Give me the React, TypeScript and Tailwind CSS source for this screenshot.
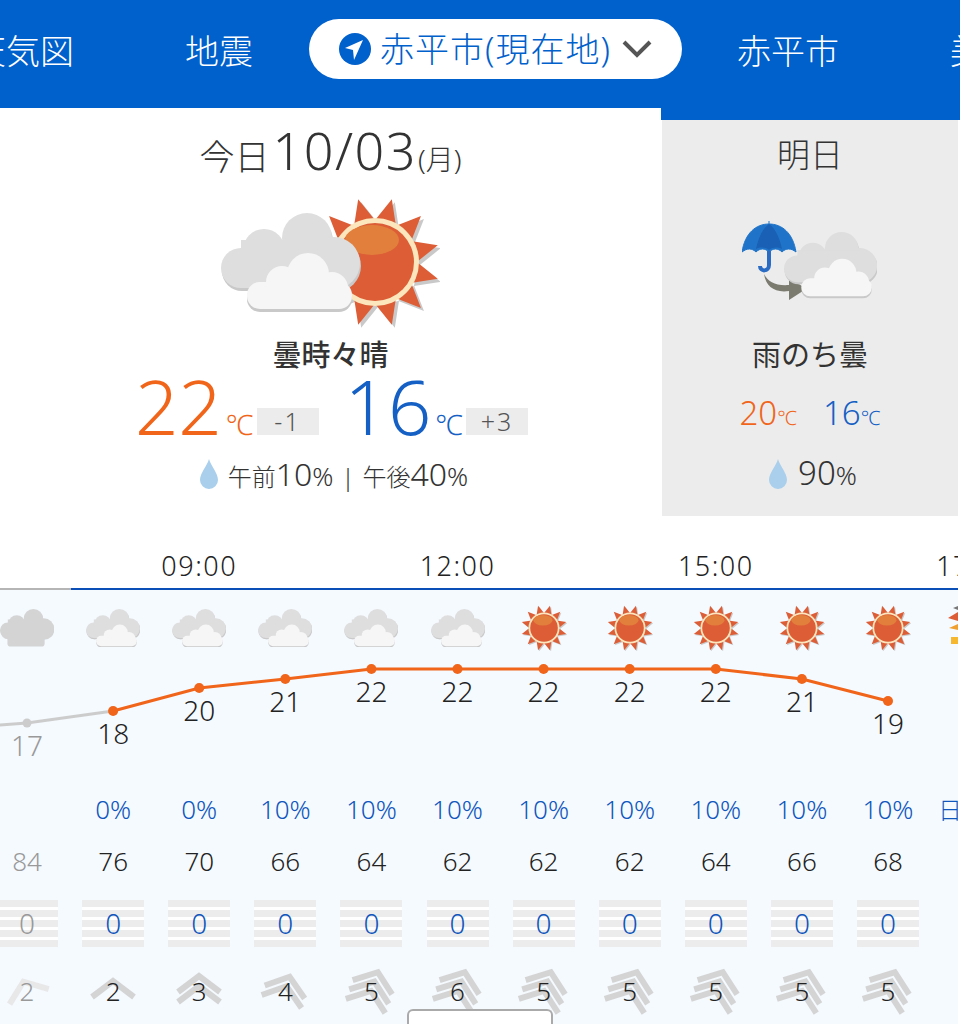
const hours = [
  { icon: 'solid', temp: 17, y: 723, pop: '', hum: 84, wind: 2, rot: -21, n: 1, past: true },
  { icon: 'cloud', temp: 18, y: 711, pop: '0%', hum: 76, wind: 2, rot: 0, n: 1 },
  { icon: 'cloud', temp: 20, y: 688, pop: '0%', hum: 70, wind: 3, rot: 0, n: 2 },
  { icon: 'cloud', temp: 21, y: 679, pop: '10%', hum: 66, wind: 4, rot: 18, n: 2 },
  { icon: 'cloud', temp: 22, y: 669, pop: '10%', hum: 64, wind: 5, rot: 20, n: 3 },
  { icon: 'cloud', temp: 22, y: 669, pop: '10%', hum: 62, wind: 6, rot: 20, n: 3 },
  { icon: 'sun', temp: 22, y: 669, pop: '10%', hum: 62, wind: 5, rot: 20, n: 3 },
  { icon: 'sun', temp: 22, y: 669, pop: '10%', hum: 62, wind: 5, rot: 20, n: 3 },
  { icon: 'sun', temp: 22, y: 669, pop: '10%', hum: 64, wind: 5, rot: 20, n: 3 },
  { icon: 'sun', temp: 21, y: 679, pop: '10%', hum: 66, wind: 5, rot: 20, n: 3 },
  { icon: 'sun', temp: 19, y: 701, pop: '10%', hum: 68, wind: 5, rot: 20, n: 3 },
];

const COL = 86.1;
const colX = (i: number) => 27 + i * COL;
const CHART_TOP = 666;
const labels: Record<number, string> = { 2: '09:00', 5: '12:00', 8: '15:00', 11: '17:00' };

function BackCloud({ fill = '#dedede', shadow = '#c9c9c9' }: { fill?: string; shadow?: string }) {
  const shape = (
    <>
      <circle cx="241" cy="268" r="20" />
      <circle cx="264" cy="250" r="21" />
      <circle cx="307" cy="238" r="25" />
      <circle cx="334" cy="263" r="26" />
      <rect x="241" y="240" width="93" height="48" />
    </>
  );
  return (
    <g>
      <g fill={shadow} transform="translate(1 3)">{shape}</g>
      <g fill={fill}>{shape}</g>
    </g>
  );
}

function FrontCloud() {
  const shape = (
    <>
      <circle cx="308" cy="274" r="21" />
      <circle cx="282" cy="282" r="16" />
      <circle cx="332" cy="288" r="16" />
      <rect x="247" y="282" width="105" height="27" rx="13" />
    </>
  );
  return (
    <g>
      <g fill="#c9c9c9" transform="translate(0 3)">{shape}</g>
      <g fill="#f6f6f6">{shape}</g>
    </g>
  );
}

function SunShape() {
  const rays = Array.from({ length: 12 }, (_, i) => 15 + i * 30);
  return (
    <g>
      {rays.map((a) => (
        <polygon key={`s${a}`} points="-11,-40 0,-65 11,-40" fill="#c9c9c9" transform={`translate(378 265) rotate(${a})`} />
      ))}
      {rays.map((a) => (
        <polygon key={a} points="-11,-40 0,-65 11,-40" fill="#dc5d36" transform={`translate(375 262) rotate(${a})`} />
      ))}
      <circle cx="375" cy="262" r="44" fill="#fbe6bd" />
      <circle cx="375" cy="262" r="39" fill="#dc5d36" />
      <ellipse cx="372" cy="240" rx="27" ry="15" fill="#e27f3c" />
    </g>
  );
}

function Drop() {
  return (
    <svg width="18" height="30" viewBox="0 0 18 30" className="block">
      <path d="M9 0C11 7 18 14 18 21A9 9 0 0 1 0 21C0 14 7 7 9 0Z" fill="#a9cfec" />
    </svg>
  );
}

function HourIcon({ kind }: { kind: string }) {
  if (kind === 'sun') {
    return (
      <svg width="46" height="46" viewBox="310 197 130 130" className="block">
        <SunShape />
      </svg>
    );
  }
  return (
    <svg width="54" height="38" viewBox="221 213 139 98" className="block">
      {kind === 'solid' ? (
        <>
          <BackCloud fill="#d4d4d4" shadow="#d4d4d4" />
          <rect x="240" y="270" width="96" height="40" rx="8" fill="#d4d4d4" />
        </>
      ) : (
        <>
          <BackCloud />
          <FrontCloud />
        </>
      )}
    </svg>
  );
}

function WindMark({ n, rot, light }: { n: number; rot: number; light?: boolean }) {
  const top = -10 - (n - 1) * 5;
  return (
    <svg width="64" height="64" viewBox="-32 -32 64 64" className="absolute left-1/2 top-1/2 -translate-x-1/2 -translate-y-1/2">
      <g transform={`rotate(${rot})`} fill="none" stroke={light ? '#e8e8e8' : '#d4d4d4'} strokeWidth="6">
        {Array.from({ length: n }, (_, i) => {
          const y = top + i * 10;
          return <polyline key={i} points={`-21,${y + 16} 0,${y} 21,${y + 16}`} />;
        })}
      </g>
    </svg>
  );
}

function Row({ children, className = '' }: { children: React.ReactNode; className?: string }) {
  return <div className={`flex -ml-4 ${className}`}>{children}</div>;
}

export default function App() {
  const orange = hours.slice(1);
  return (
    <div className="relative h-[1024px] w-[960px] overflow-hidden bg-white font-['Noto_Sans','Noto_Sans_CJK_JP',sans-serif] font-light text-[#333]">
      {/* 上部タブ */}
      <header className="flex h-[108px] items-center whitespace-nowrap bg-[#0060cc] pb-[10px] text-[34px] text-white">
        <span className="ml-[-28px] mt-[4px] w-[213px] shrink-0">天気図</span>
        <span className="mt-[4px] w-[124px] shrink-0">地震</span>
        <div className="flex h-[60px] w-[373px] shrink-0 items-center rounded-full bg-white pl-[30px] text-[#0060cc]">
          <svg width="32" height="32" viewBox="0 0 32 32" className="shrink-0">
            <circle cx="16" cy="16" r="16" fill="#0060cc" />
            <polygon points="24,7 15,27 14,17 6,15" fill="#fff" />
          </svg>
          <span className="ml-[9px] w-[232px] shrink-0 text-[34px] tracking-[1px]">赤平市(現在地)</span>
          <svg width="30" height="18" viewBox="0 0 30 18" className="ml-[10px] shrink-0">
            <polyline points="2,2 15,15 28,2" fill="none" stroke="#555" strokeWidth="4" />
          </svg>
        </div>
        <span className="ml-[55px] mt-[4px] w-[213px] shrink-0">赤平市</span>
        <span className="mt-[4px] shrink-0">美唄市</span>
      </header>

      {/* 今日と明日 */}
      <div className="flex h-[408px]">
        <section className="flex w-[661px] shrink-0 flex-col items-center">
          <div className="mt-[3px] flex h-[60px] items-baseline whitespace-nowrap text-[35px]">
            今日<span className="ml-[3px] text-[52px] tracking-[1.5px]">10/03</span>
            <span className="ml-[1px] text-[28px]">(月)</span>
          </div>
          <svg width="219" height="131" viewBox="221 197 219 131" className="mt-[26px] block">
            <SunShape />
            <BackCloud />
            <FrontCloud />
          </svg>
          <div className="mt-[7px] h-[40px] text-[29px] font-medium leading-[40px]">曇時々晴</div>
          <div className="flex h-[62px] items-baseline whitespace-nowrap pl-[2px]">
            <span className="text-[76px] leading-[62px] text-[#f0651a]">22</span>
            <span className="ml-[4px] text-[28px] text-[#f0651a]">℃</span>
            <span className="ml-[3px] h-[27px] w-[62px] -translate-y-[4px] bg-[#ececec] text-center text-[25px] leading-[27px] tracking-[2px] text-[#555]">-1</span>
            <span className="ml-[26px] text-[76px] leading-[62px] text-[#1560c4]">16</span>
            <span className="ml-[4px] text-[28px] text-[#1560c4]">℃</span>
            <span className="ml-[3px] h-[27px] w-[62px] -translate-y-[4px] bg-[#ececec] text-center text-[25px] leading-[27px] tracking-[2px] text-[#555]">+3</span>
          </div>
          <div className="mt-[13px] flex items-center whitespace-nowrap pl-[7px]">
            <Drop />
            <span className="ml-[10px] flex items-baseline">
              <span className="text-[24px]">午前</span>
              <span className="text-[32px]">10</span>
              <span className="text-[26px]">%</span>
              <span className="mx-[8px] text-[24px]">|</span>
              <span className="text-[24px]">午後</span>
              <span className="text-[32px]">40</span>
              <span className="text-[26px]">%</span>
            </span>
          </div>
        </section>
        <aside className="flex flex-1 flex-col">
          <div className="h-[12px] bg-[#0060cc]" />
          <div className="ml-px mr-[2px] flex flex-1 flex-col items-center bg-[#ececec]">
            <div className="mt-[12px] h-[46px] text-[33px] leading-[46px]">明日</div>
            <svg width="135" height="83" viewBox="0 0 135 83" className="ml-[-2px] mt-[43px] block">
              <path d="M27 0v3M0 31C3 12 14 3 27 3s24 9 27 28c-5-4-10-4-14 0-4-4-9-4-13 0-4-4-9-4-13 0-4-4-9-4-14 0Z" fill="#1f74c9" stroke="#1f74c9" strokeWidth="1" />
              <path d="M27 3c-7 5-11 15-13 25 4-2 9-2 13 1 4-3 9-3 13-1-2-10-6-20-13-25Z" fill="#1a60b4" />
              <path d="M27 30v14c0 7-9 7-9 1" fill="none" stroke="#2a6cc4" strokeWidth="4" />
              <path d="M22 53c4 8 12 12 25 11v-8l17 12-17 11v-9C33 72 24 66 22 53Z" fill="#7c7b70" />
              <g transform="translate(42 11) scale(0.67) translate(-221 -213)">
                <BackCloud />
                <FrontCloud />
              </g>
            </svg>
            <div className="mt-[31px] h-[40px] text-[29px] font-normal leading-[40px]">雨のち曇</div>
            <div className="mt-[18px] flex items-baseline whitespace-nowrap">
              <span className="text-[33px] leading-[40px] text-[#f0651a]">20</span>
              <span className="text-[20px] text-[#f0651a]">℃</span>
              <span className="ml-[26px] text-[33px] leading-[40px] text-[#1560c4]">16</span>
              <span className="text-[20px] text-[#1560c4]">℃</span>
            </div>
            <div className="ml-[6px] mt-[20px] flex items-center">
              <Drop />
              <span className="ml-[11px] flex items-baseline">
                <span className="text-[33px] leading-[40px]">90</span>
                <span className="text-[26px]">%</span>
              </span>
            </div>
          </div>
        </aside>
      </div>

      {/* 時間ごとの予報 */}
      <div className="w-[958px] overflow-hidden">
        <Row className="h-[72px] items-end pb-[4px]">
          {Array.from({ length: 12 }, (_, i) => (
            <div key={i} className="flex h-[36px] w-[86.1px] shrink-0 items-center justify-center whitespace-nowrap text-[27px] tracking-[1.5px] text-[#222]">
              {labels[i]}
            </div>
          ))}
        </Row>
        <div className="flex h-[2px]">
          <div className="w-[71px] bg-[#b5b5b5]" />
          <div className="flex-1 bg-[#0a4fb8]" />
        </div>

        <div className="h-[434px] bg-[#f5faff]">
          <Row className="h-[76px] items-center">
            {hours.map((h, i) => (
              <div key={i} className="flex w-[86.1px] shrink-0 justify-center">
                <HourIcon kind={h.icon} />
              </div>
            ))}
            <div className="flex w-[86.1px] shrink-0 justify-center">
              <svg width="52" height="44" viewBox="0 0 52 44" className="block">
                <polygon points="0,12 10,6 10,15" fill="#dc5d36" />
                <polygon points="1,22 10,18 10,24" fill="#f0a030" />
                <rect x="3" y="31" width="8" height="7" fill="#f5b82e" />
                <polygon points="5,2 10,0 10,4" fill="#777" />
              </svg>
            </div>
          </Row>

          {/* 気温グラフ */}
          <div className="relative h-[124px]">
            <svg width="958" height="124" viewBox={`0 ${CHART_TOP} 958 124`} className="absolute left-0 top-0 overflow-visible">
              <polyline points={`-59,729 27,723 ${colX(1)},711`} fill="none" stroke="#cccccc" strokeWidth="3" />
              <circle cx="27" cy="723" r="4.5" fill="#cccccc" />
              <polyline points={orange.map((h, i) => `${colX(i + 1)},${h.y}`).join(' ')} fill="none" stroke="#f0651a" strokeWidth="3" />
              {orange.map((h, i) => (
                <circle key={i} cx={colX(i + 1)} cy={h.y} r="5" fill="#f0651a" />
              ))}
            </svg>
            <Row>
              {hours.map((h, i) => (
                <div
                  key={i}
                  className={`relative w-[86.1px] shrink-0 text-center text-[28px] leading-[36px] ${h.past ? 'text-[#999]' : 'text-[#222]'}`}
                  style={{ paddingTop: h.y + 4 - CHART_TOP }}
                >
                  {h.temp}
                </div>
              ))}
            </Row>
          </div>

          {/* 降水確率 */}
          <Row className="h-[39px] items-center text-[26px] text-[#0f56bd]">
            {hours.map((h, i) => (
              <div key={i} className="w-[86.1px] shrink-0 text-center">{h.pop}</div>
            ))}
            <div className="w-[86.1px] shrink-0 whitespace-nowrap text-center text-[24px]">日の入</div>
          </Row>

          {/* 湿度 */}
          <Row className="mt-[12px] h-[40px] items-center text-[26px]">
            {hours.map((h, i) => (
              <div key={i} className={`w-[86.1px] shrink-0 text-center ${h.past ? 'text-[#999]' : 'text-[#222]'}`}>{h.hum}</div>
            ))}
          </Row>

          {/* 降水量 */}
          <Row className="mt-[19px]">
            {hours.map((h, i) => (
              <div key={i} className="flex w-[86.1px] shrink-0 justify-center">
                <div className="relative flex h-[47px] w-[62px] flex-col gap-[3px] bg-white">
                  {[0, 1, 2, 3, 4].map((b) => (
                    <div key={b} className="h-[7px] bg-[#ececec]" />
                  ))}
                  <span className={`absolute inset-0 text-center text-[28px] leading-[47px] ${h.past ? 'text-[#999]' : 'text-[#0f56bd]'}`}>0</span>
                </div>
              </div>
            ))}
          </Row>

          {/* 風速 */}
          <Row className="mt-[19px] h-[50px] items-center text-[26px]">
            {hours.map((h, i) => (
              <div key={i} className={`relative w-[86.1px] shrink-0 text-center ${h.past ? 'text-[#999]' : 'text-[#222]'}`}>
                <WindMark n={h.n} rot={h.rot} light={h.past} />
                <span className="relative">{h.wind}</span>
              </div>
            ))}
          </Row>
        </div>
      </div>

      <div className="absolute bottom-0 left-[407px] h-[15px] w-[146px] rounded-t-md border-2 border-b-0 border-[#aaa] bg-white" />
    </div>
  );
}
